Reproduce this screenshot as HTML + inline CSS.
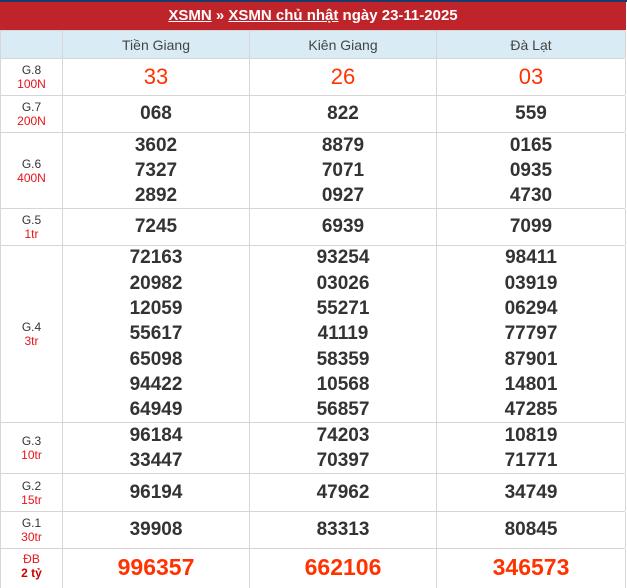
<!DOCTYPE html><html><head><meta charset="utf-8"><style>
body{margin:0;background:#fff;font-family:"Liberation Sans",Arial,sans-serif;width:627px;height:579px;overflow:hidden;position:relative}
.top{position:absolute;left:0;top:0;width:627px;height:2px;background:#1a3a6a}
.hd{position:absolute;left:0;top:2px;width:626px;height:28px;background:#c0242b;color:#fff;font-weight:bold;font-size:15px;text-align:center;line-height:28px}
.hd u{color:#fff}
.row{position:absolute;left:0;width:625px;box-sizing:border-box;border-top:1px solid #d6d6d6}
.c{position:absolute;top:0;bottom:0;box-sizing:border-box;border-left:1px solid #d6d6d6;display:flex;flex-direction:column;justify-content:center;align-items:center;text-align:center;color:#333}
.c0{left:0;width:62px}.c1{left:62px;width:187px}.c2{left:249px;width:187px}.c3{left:436px;width:190px;border-right:1px solid #d6d6d6}
.h .c{background:#d9ecf5;font-size:14px;color:#444}
.l{font-size:12px;line-height:14px}
.l span{color:#e8141a;display:block}
.n{font-weight:bold;font-size:19px;line-height:25.3px}
.r{color:#ff3300;font-size:22px;font-weight:normal}
.db{color:#ff3300;font-size:23px;font-weight:bold}
</style></head><body>
<div class="top"></div>
<div class="hd"><u>XSMN</u> » <u>XSMN chủ nhật</u> ngày 23-11-2025</div>
<div class="row h" style="top:30px;height:28px"><div class="c c0"></div><div class="c c1">Tiền Giang</div><div class="c c2">Kiên Giang</div><div class="c c3">Đà Lạt</div></div>
<div class="row" style="top:58px;height:37px"><div class="c c0 l">G.8<span>100N</span></div><div class="c c1 n r">33</div><div class="c c2 n r">26</div><div class="c c3 n r">03</div></div>
<div class="row" style="top:95px;height:37px"><div class="c c0 l">G.7<span>200N</span></div><div class="c c1 n">068</div><div class="c c2 n">822</div><div class="c c3 n">559</div></div>
<div class="row" style="top:132px;height:76px"><div class="c c0 l">G.6<span>400N</span></div><div class="c c1 n">3602<br>7327<br>2892</div><div class="c c2 n">8879<br>7071<br>0927</div><div class="c c3 n">0165<br>0935<br>4730</div></div>
<div class="row" style="top:208px;height:37px"><div class="c c0 l">G.5<span>1tr</span></div><div class="c c1 n">7245</div><div class="c c2 n">6939</div><div class="c c3 n">7099</div></div>
<div class="row" style="top:245px;height:177px"><div class="c c0 l">G.4<span>3tr</span></div><div class="c c1 n">72163<br>20982<br>12059<br>55617<br>65098<br>94422<br>64949</div><div class="c c2 n">93254<br>03026<br>55271<br>41119<br>58359<br>10568<br>56857</div><div class="c c3 n">98411<br>03919<br>06294<br>77797<br>87901<br>14801<br>47285</div></div>
<div class="row" style="top:422px;height:51px"><div class="c c0 l">G.3<span>10tr</span></div><div class="c c1 n">96184<br>33447</div><div class="c c2 n">74203<br>70397</div><div class="c c3 n">10819<br>71771</div></div>
<div class="row" style="top:473px;height:38px"><div class="c c0 l">G.2<span>15tr</span></div><div class="c c1 n">96194</div><div class="c c2 n">47962</div><div class="c c3 n">34749</div></div>
<div class="row" style="top:511px;height:37px"><div class="c c0 l">G.1<span>30tr</span></div><div class="c c1 n">39908</div><div class="c c2 n">83313</div><div class="c c3 n">80845</div></div>
<div class="row" style="top:548px;height:40px"><div class="c c0 l" style="color:#e8141a;justify-content:flex-start;padding-top:3px">ĐB<span style="font-weight:bold;color:#c00">2 tỷ</span></div><div class="c c1 db" style="justify-content:flex-start;padding-top:5px">996357</div><div class="c c2 db" style="justify-content:flex-start;padding-top:5px">662106</div><div class="c c3 db" style="justify-content:flex-start;padding-top:5px">346573</div></div>
</body></html>
